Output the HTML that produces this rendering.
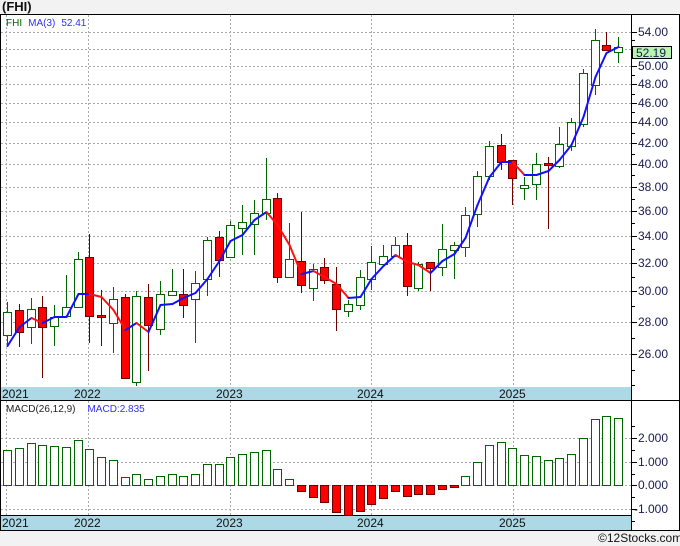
<!DOCTYPE html>
<html><head><meta charset="utf-8"><style>
html,body{margin:0;padding:0;background:#f2f2f2;width:680px;height:546px;overflow:hidden}
svg{display:block}
text{font-family:"Liberation Sans",Tahoma,sans-serif}
</style></head><body>
<svg id="s" width="680" height="546" viewBox="0 0 680 546" xmlns="http://www.w3.org/2000/svg">
<rect x="0" y="0" width="680" height="546" fill="#f2f2f2"/>
<text x="2" y="11" font-size="13" font-weight="bold" fill="#111">(FHI)</text>
<rect x="0.5" y="14.5" width="679" height="516" fill="#fff" stroke="#000"/>
<rect x="1" y="387" width="631" height="13" fill="#add8e6"/>
<rect x="1" y="516" width="631" height="14" fill="#add8e6"/>
<line x1="0" y1="400.5" x2="680" y2="400.5" stroke="#000"/>
<line x1="0" y1="515.5" x2="632" y2="515.5" stroke="#000"/>
<line x1="631.5" y1="14" x2="631.5" y2="530" stroke="#000"/>
<g id="grid" stroke="#aaa" stroke-dasharray="2,2" stroke-width="1"></g>
<g id="ticks" stroke="#000"></g>
<g id="c"></g>
<g font-size="12" fill="#1a1a50">
<text x="638" y="36">54.00</text>
<text x="638" y="70">50.00</text>
<text x="638" y="88">48.00</text>
<text x="638" y="107">46.00</text>
<text x="638" y="126">44.00</text>
<text x="638" y="147">42.00</text>
<text x="638" y="168">40.00</text>
<text x="638" y="191">38.00</text>
<text x="638" y="215">36.00</text>
<text x="638" y="240">34.00</text>
<text x="638" y="267">32.00</text>
<text x="638" y="295">30.00</text>
<text x="638" y="326">28.00</text>
<text x="638" y="358">26.00</text>
<text x="638" y="442">2.000</text>
<text x="638" y="466">1.000</text>
<text x="638" y="489">0.000</text>
<text x="634" y="513">-1.000</text>
</g>
<rect x="632.5" y="46.5" width="39" height="12" fill="#b8f5b0" stroke="#000"/>
<text x="636" y="57" font-size="12" fill="#1a1a50">52.19</text>
<g font-size="12" fill="#111">
<text x="2" y="398">2021</text><text x="74" y="398">2022</text><text x="216" y="398">2023</text><text x="357" y="398">2024</text><text x="499" y="398">2025</text>
<text x="2" y="527">2021</text><text x="74" y="527">2022</text><text x="216" y="527">2023</text><text x="357" y="527">2024</text><text x="499" y="527">2025</text>
</g>
<text x="6" y="26" font-size="10"><tspan fill="#006400">FHI</tspan><tspan fill="#3030ff" dx="6">MA(3)</tspan><tspan fill="#3030ff" dx="6">52.41</tspan></text>
<text x="6" y="412" font-size="10"><tspan fill="#222">MACD(26,12,9)</tspan><tspan fill="#3030ff" dx="12">MACD:2.835</tspan></text>
<text x="598" y="542" font-size="12" fill="#111">©12Stocks.com</text>
</svg>
<script>
var NS="http://www.w3.org/2000/svg";
function el(p,t,a){var e=document.createElementNS(NS,t);for(var k in a)e.setAttribute(k,a[k]);p.appendChild(e);return e;}
var g=document.getElementById('grid'),tk=document.getElementById('ticks'),c=document.getElementById('c');
[32,49,66,84,103,122,143,164,187,211,236,263,291,322,354].forEach(function(y){el(g,'line',{x1:1,x2:631,y1:y+.5,y2:y+.5});el(tk,'line',{x1:632,x2:637,y1:y+.5,y2:y+.5});});
[40,57,75,94,112,133,154,175,199,223,249,277,306,338,370,385].forEach(function(y){el(tk,'line',{x1:632,x2:635,y1:y+.5,y2:y+.5});});
[438,462,485,509].forEach(function(y){el(g,'line',{x1:1,x2:631,y1:y+.5,y2:y+.5});el(tk,'line',{x1:632,x2:637,y1:y+.5,y2:y+.5});});
[426,450,474,497,521].forEach(function(y){el(tk,'line',{x1:632,x2:635,y1:y+.5,y2:y+.5});});
[6,88,230,371,513].forEach(function(x){el(g,'line',{x1:x+.5,x2:x+.5,y1:15,y2:387});el(g,'line',{x1:x+.5,x2:x+.5,y1:401,y2:515});});
// [green?, bodyTop, bodyBot, wickTop, wickBot]
var C=[[1,312,335,302,346],[0,310,332,304,347],[1,309,327,298,344],[0,307,327,296,378],[1,317,326,305,346],[1,307,316,275,316],[1,259,307,252,308],[0,257,316,234,343],[0,315,317,290,346],[1,299,323,287,353],[0,297,378,294,378],[1,296,382,291,386],[0,297,325,284,371],[1,294,329,281,335],[1,291,295,269,296],[0,294,305,269,318],[1,283,299,271,343],[1,240,279,237,296],[0,237,260,231,277],[1,225,257,221,257],[1,222,228,205,255],[1,213,224,200,255],[1,199,213,158,220],[0,198,277,193,283],[1,259,277,223,277],[0,261,285,212,293],[1,269,288,264,301],[0,267,280,258,284],[0,284,309,267,331],[1,304,311,300,317],[1,277,305,270,310],[1,262,279,246,290],[1,256,264,245,264],[1,245,256,237,256],[0,245,286,233,296],[1,264,288,262,291],[0,262,268,262,291],[1,249,267,224,276],[1,245,250,242,279],[1,215,247,207,257],[1,176,214,171,227],[1,146,176,141,180],[0,145,162,134,170],[0,160,178,160,205],[1,185,188,177,200],[1,164,184,153,200],[0,163,165,157,229],[1,144,166,127,168],[1,122,146,118,151],[1,73,124,69,127],[1,40,85,29,95],[0,45,50,32,50],[1,47,52,37,63]];
var MA=[346,327,318,323,317,317,294,294,297,310,330,323,332,305,304,298,293,279,261,241,235,220,212,225,245,274,271,277,284,298,297,279,266,255,262,265,273,261,254,238,205,177,162,162,175,175,171,160,145,117,77,53,47];
var M=[450,448,443,445,446,447,440,449,457,460,477,474,479,476,474,476,474,464,464,457,454,452,450,469,479,491,497,502,512,515,511,504,498,491,496,494,494,489,487,476,462,445,442,448,455,456,460,458,454,438,419,416,418];
function X(i){return Math.round(7+11.75*i);}
C.forEach(function(d,i){var x=X(i);var col=d[0]?'#006400':'#700000';
 el(c,'line',{x1:x+.5,x2:x+.5,y1:d[3],y2:d[4],stroke:col});
 var h=Math.max(d[2]-d[1],2);
 el(c,'rect',{x:x-3.5,y:d[1]+.5,width:8,height:h,fill:d[0]?'#fff':'#ff0000',stroke:col});
});
for(var i=1;i<MA.length;i++){el(c,'line',{x1:X(i-1)+.5,y1:MA[i-1],x2:X(i)+.5,y2:MA[i],stroke:MA[i]<=MA[i-1]?'#1010ff':'#ff1010','stroke-width':2,'stroke-linecap':'round'});}
M.forEach(function(y,i){var x=X(i);var up=y<485;
 el(c,'rect',{x:x-3.5,y:(up?y:485)+.5,width:8,height:Math.max(Math.abs(485-y),1),fill:up?'#fff':'#ff0000',stroke:up?'#006400':'#700000'});});
</script>
</body></html>
